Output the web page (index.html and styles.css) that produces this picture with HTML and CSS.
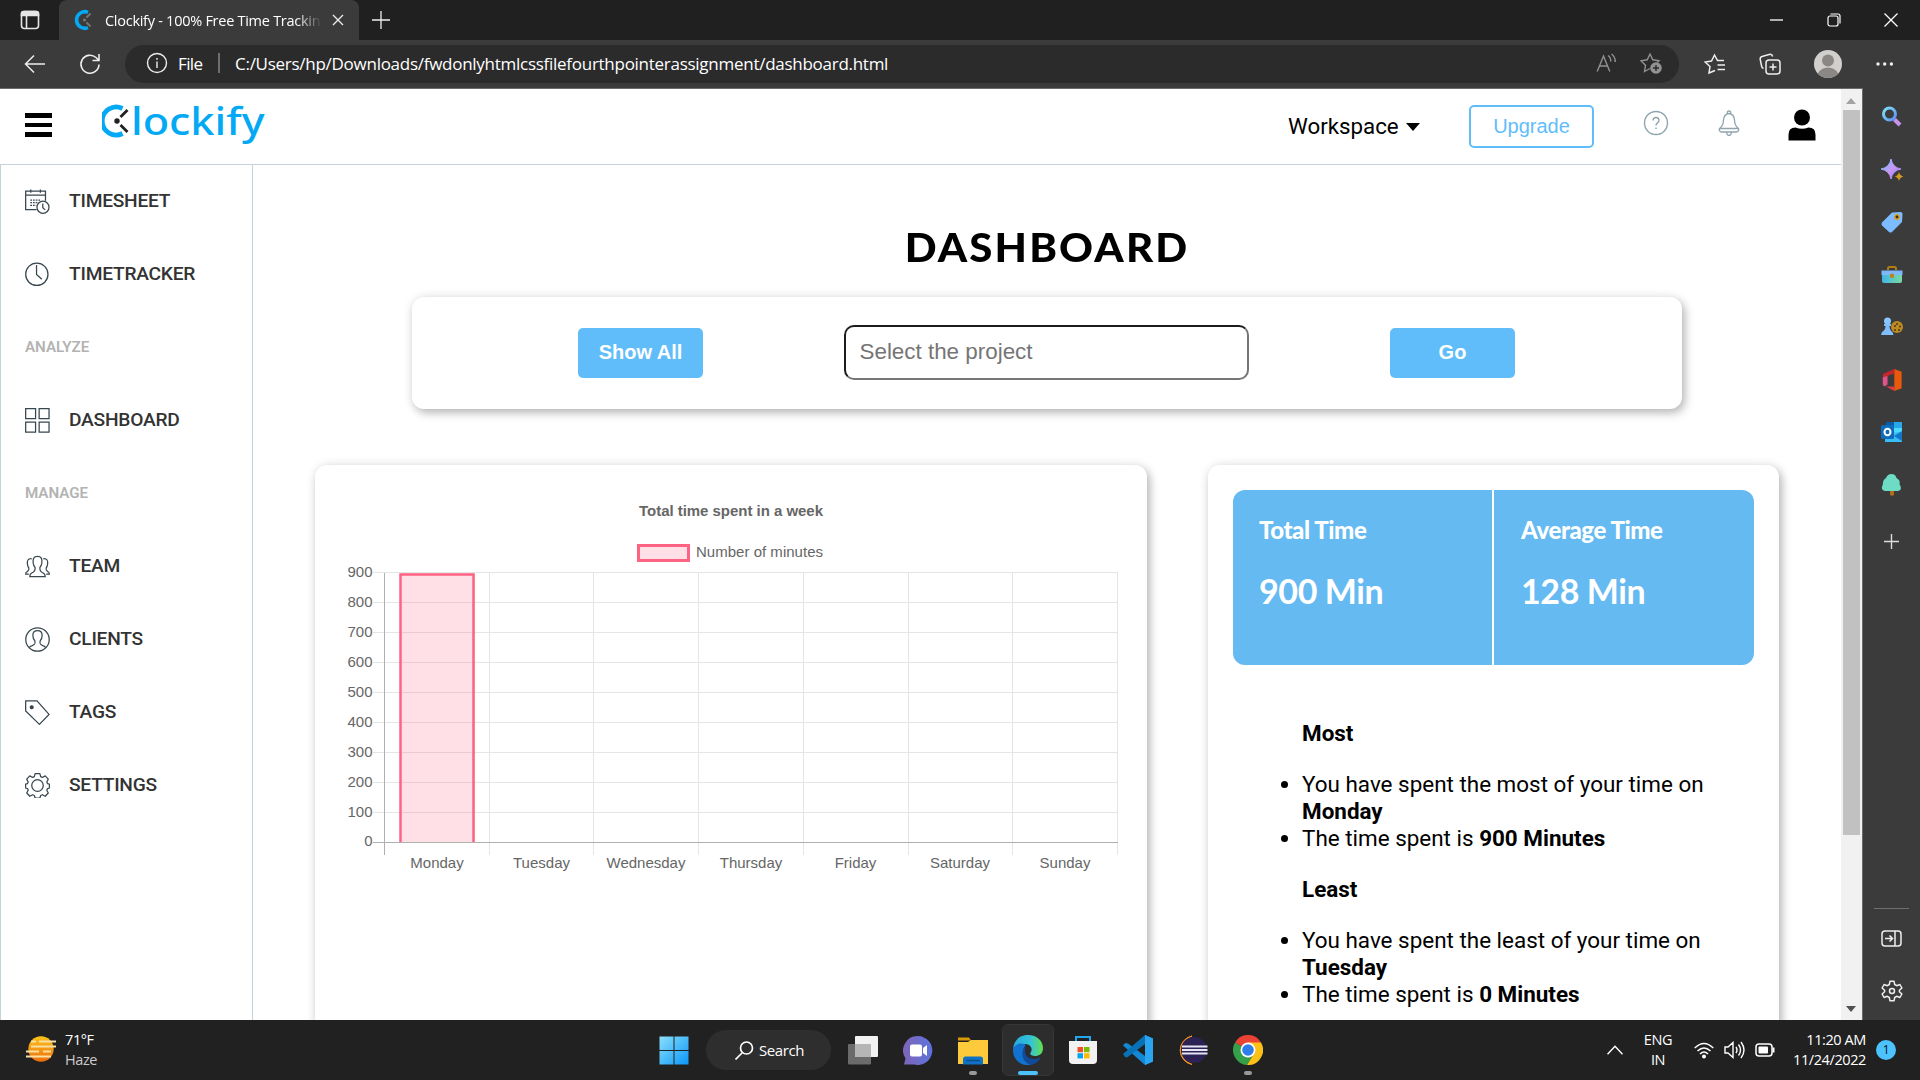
FILE: index.html
```html
<!DOCTYPE html>
<html lang="en">
<head>
<meta charset="utf-8">
<title>Clockify - 100% Free Time Tracking</title>
<link rel="stylesheet" href="styles.css">
</head>
<body>
<div class="screen">
  <header class="tabs">
    <div class="tab-menu"><svg width="20" height="20" viewBox="0 0 20 20" fill="none" stroke="#e6e6e6" stroke-width="1.6"><rect x="1.5" y="1.5" width="17" height="17" rx="3"/><path d="M1.500 5.500V3.500q0-2 2-2h13q2 0 2 2v2z" fill="#e6e6e6"/><path d="M6.500 6v12.500"/></svg></div>
    <div class="tab">
      <svg width="20" height="22" viewBox="0 0 20 22" fill="none"><path d="M14 3.300A8.300 8.300 0 1 0 14 18.700" stroke="#03a9f4" stroke-width="3.600"/><circle cx="10.500" cy="11" r="1.600" fill="#777"/><path d="M12.500 8.500l4-4M12.500 13.500l4 4" stroke="#777" stroke-width="1.800"/></svg>
      <span class="tab-title">Clockify - 100% Free Time Trackin</span>
      <svg width="12" height="12" viewBox="0 0 12 12" stroke="#eee" stroke-width="1.300"><path d="M1 1l10 10M11 1L1 11"/></svg>
    </div>
    <svg class="new-tab" width="18" height="18" viewBox="0 0 18 18" stroke="#eee" stroke-width="1.300"><path d="M9 0v18M0 9h18"/></svg>
    <div class="win-buttons">
      <svg width="14" height="14" viewBox="0 0 14 14" stroke="#fff" stroke-width="1.300"><path d="M0 7h13"/></svg>
      <svg width="14" height="14" viewBox="0 0 14 14" stroke="#fff" fill="none" stroke-width="1.200"><rect x="1" y="3" width="10" height="10" rx="2"/><path d="M3.500 1H11q2 0 2 2v7.500"/></svg>
      <svg width="14" height="14" viewBox="0 0 14 14" stroke="#fff" stroke-width="1.300"><path d="M.5.5l13 13M13.500.5l-13 13"/></svg>
    </div>
  </header>

  <div class="toolbar">
    <svg class="back" width="22" height="20" viewBox="0 0 22 20" fill="none" stroke="#eee" stroke-width="1.500"><path d="M10 1.500L1.500 10l8.500 8.500M1.500 10H21"/></svg>
    <svg class="reload" width="22" height="22" viewBox="0 0 22 22" fill="none" stroke="#eee" stroke-width="1.600"><path d="M20 11.500A9 9 0 1 1 17 4.500l2.500 2.500M20 1v6.500h-6.500"/></svg>
    <div class="address">
      <svg width="22" height="22" viewBox="0 0 22 22" fill="none" stroke="#eee" stroke-width="1.400"><circle cx="11" cy="11" r="9.500"/><path d="M11 9.500V16M11 6v1.800"/></svg>
      <span class="scheme">File</span><i></i>
      <span class="url">C:/Users/hp/Downloads/fwdonlyhtmlcssfilefourthpointerassignment/dashboard.html</span>
      <svg class="aloud" width="21" height="20" viewBox="0 0 21 20" fill="none" stroke="#929292" stroke-width="1.400"><path d="M1.200 18.500L7.500 3l6.300 15.500M3.500 13h8M12 2.500q3 2 2.800 6M15.500 1q4 3 3.700 8"/></svg>
      <svg width="23" height="22" viewBox="0 0 23 22" fill="none" stroke="#929292" stroke-width="1.400"><path d="M10 16.500L4.500 19.500l1-6.200L1 8.800l6.200-1L10 2l2.800 5.800 6.200 1-1.800 1.800"/><circle cx="16" cy="16" r="5.800" fill="#929292" stroke="none"/><path d="M16 13v6M13 16h6" stroke="#2b2b2b"/></svg>
    </div>
    <svg width="22" height="22" viewBox="0 0 22 22" fill="none" stroke="#eee" stroke-width="1.500"><path d="M11 17.500L5 20l1-6.500L1 9l6.500-1L10.500 2l3 5.500H20M13.500 12H21M13.500 16.500H21"/></svg>
    <svg width="22" height="22" viewBox="0 0 22 22" fill="none" stroke="#eee" stroke-width="1.500"><rect x="7" y="7" width="14" height="14" rx="3"/><path d="M14 10.500v7M10.500 14h7M4.500 15.500Q3 15 2.700 13.500L1.200 6.300Q1 4 3 3.500L11 1.300q2-.3 2.700 2.200"/></svg>
    <svg width="28" height="28" viewBox="0 0 28 28"><defs><clipPath id="av"><circle cx="14" cy="14" r="14"/></clipPath></defs><circle cx="14" cy="14" r="14" fill="#d2d0ce"/><circle cx="14" cy="10.500" r="6" fill="#8a8784"/><path clip-path="url(#av)" d="M3 28c0-14 22-14 22 0z" fill="#8a8784"/></svg>
    <svg width="18" height="4" viewBox="0 0 18 4" fill="#eee"><circle cx="2" cy="2" r="1.700"/><circle cx="8.700" cy="2" r="1.700"/><circle cx="15.400" cy="2" r="1.700"/></svg>
  </div>

  <div class="middle">
    <div class="page">
      <nav class="navbar">
        <div class="burger"><i></i><i></i><i></i></div>
        <svg class="logo" width="170" height="52" viewBox="0 0 170 52" fill="none"><path d="M20.500 5.500A14 14 0 1 0 20.500 30.500" stroke="#03a9f4" stroke-width="4.800"/><circle cx="15" cy="18" r="2.700" fill="#222"/><path d="M18.500 14l7-7M18.500 22l7 7" stroke="#222" stroke-width="2.800"/><text class="logo-text" x="29" y="31.500" textLength="133.500" lengthAdjust="spacingAndGlyphs">lockify</text></svg>
        <div class="workspace">Workspace<svg width="14" height="8" viewBox="0 0 14 8"><path d="M0 0h14L7 8z"/></svg></div>
        <button class="upgrade">Upgrade</button>
        <svg class="help" width="26" height="26" viewBox="0 0 26 26" fill="none" stroke="#90a4ae" stroke-width="1.400"><circle cx="13" cy="13" r="11.500"/><path d="M10 10.500q.2-3 3-3t3 2.800q0 1.700-1.800 2.800-1.200.8-1.200 2.400M13 17.500v1.500"/></svg>
        <svg class="bell" width="22" height="26" viewBox="0 0 22 26" fill="none" stroke="#90a4ae" stroke-width="1.300"><path d="M9.300 3.600Q9 1 11 1t1.700 2.600M11 3.500q-5 .5-5.500 6.500-.2 6-4 8.500-1 3 2.500 3.500h14q3.500-.5 2.500-3.500-3.800-2.500-4-8.500-.5-6-5.500-6.500zM2 18.500h18M8.500 22.500q.5 3 2.500 3t2.500-3"/></svg>
        <svg class="user" width="28" height="32" viewBox="0 0 28 32"><circle cx="14" cy="8.500" r="8"/><path d="M.5 31.500v-6q0-7 7-7 6.500 2.500 13 0 7 0 7 7v6z"/></svg>
      </nav>
      <div class="content">
        <aside class="menu">
          <a><svg viewBox="0 0 26 26"><path d="M12 21.500H.7V2.300h20.600v10M.7 6.300h20.600M6 .5v3.500M16 .5v3.500"/><path d="M5.500 11.500h11M5.500 14.200h8M5.500 17h6" stroke-dasharray="1.800 1"/><circle cx="18.700" cy="19" r="6.300"/><path d="M18.500 15v4.500l2.500 2.200"/></svg>TIMESHEET</a>
          <a><svg viewBox="0 0 26 26"><circle cx="12.300" cy="12.800" r="11.600"/><path d="M12 3v10l5.500 5"/></svg>TIMETRACKER</a>
          <h6>ANALYZE</h6>
          <a><svg viewBox="0 0 26 26"><path d="M.7.700h10.300V11H.7zM14.700.700H25V11H14.700zM.7 14.700h10.300V25H.7zM14.700 14.700H25V25H14.700z"/></svg>DASHBOARD</a>
          <h6>MANAGE</h6>
          <a><svg viewBox="0 0 26 26"><path d="M13 2.500c-4 0-5 2.500-4.500 7q.5 3 2 4.500c.5 3.500-.5 4.500-3 5.500Q5 20.500 5 23.500h16q0-3-2.500-4c-2.500-1-3.500-2-3-5.500q1.500-1.500 2-4.500c.5-4.500-.5-7-4.500-7zM7 5C3 4.500 2 7 2.500 10.500q.5 3 1.500 4c.5 3-.5 3-2 4Q.7 19 .7 21H4M19 5c4-.5 5 2 4.500 5.500q-.5 3-1.500 4c-.5 3 .5 3 2 4q1.300.5 1.300 2.500H22"/></svg>TEAM</a>
          <a><svg viewBox="0 0 26 26"><circle cx="13" cy="13" r="12.200"/><path d="M4.500 21.500q.5-1.500 3-2.200c3-1 3.500-2 2.700-5q-2-2-2-5.500c0-3.500 1.800-5 4.800-5s4.800 1.500 4.800 5q0 3.500-2 5.500c-.8 3-.3 4 2.700 5q2.500.7 3 2.200"/></svg>CLIENTS</a>
          <a><svg viewBox="0 0 26 26"><path d="M.7.900h11.800L25 15 15 25.300.7 11.500z"/><circle cx="7" cy="7.500" r="1.500" fill="#37474f"/></svg>TAGS</a>
          <a><svg viewBox="0 0 26 26"><circle cx="13" cy="13" r="6"/><path d="M10.500.7h5l.8 3.100 1.800.8 2.900-1.600 3.200 3.400-1.500 2.900.7 1.700 2 .600v4l-2 .6-.7 1.700 1.500 2.900-3.200 3.400-2.900-1.600-1.800.8-.8 2.600h-5l-.8-2.600-1.800-.8L5 24.200l-3.200-3.400 1.500-2.900-.7-1.700-2-.6v-4l2-.6.7-1.700-1.500-2.900L5 3l2.900 1.600 1.800-.8z" stroke-linejoin="round"/></svg>SETTINGS</a>
        </aside>
        <main class="main">
          <h1>DASHBOARD</h1>
          <section class="card filter">
            <button class="btn">Show All</button>
            <input type="text" placeholder="Select the project">
            <button class="btn">Go</button>
          </section>
          <div class="panels">
            <section class="card chart">
              <svg width="832" height="420" viewBox="315 465 832 420">
                <text class="ct" x="731" y="516" textLength="184">Total time spent in a week</text>
                <rect x="638.500" y="545.500" width="50" height="15" fill="#ffe0e6" stroke="#ff6384" stroke-width="3"/>
                <text x="696" y="557" textLength="127">Number of minutes</text>
                <g stroke="#e5e5e5">
                  <path d="M373 572.500h745M373 602.500h745M373 632.500h745M373 662.500h745M373 692.500h745M373 722.500h745M373 752.500h745M373 782.500h745M373 812.500h745"/>
                  <path d="M489.500 572v283M593.500 572v283M698.500 572v283M803.500 572v283M908.500 572v283M1012.500 572v283M1117.500 572v283"/>
                </g>
                <path d="M384.500 573v282M373 842.500h745" stroke="#b0b0b0"/>
                <path d="M400 842V573h75v269z" fill="#ff6384" fill-opacity=".2"/>
                <path d="M400.500 842V574.500h73V842" fill="none" stroke="#ff6384" stroke-width="2.500"/>
                <g text-anchor="end"><text x="372.500" y="577">900</text><text x="372.500" y="607">800</text><text x="372.500" y="637">700</text><text x="372.500" y="667">600</text><text x="372.500" y="697">500</text><text x="372.500" y="727">400</text><text x="372.500" y="757">300</text><text x="372.500" y="787">200</text><text x="372.500" y="817">100</text><text x="372.500" y="846">0</text></g>
                <g text-anchor="middle"><text x="437" y="868">Monday</text><text x="541.500" y="868">Tuesday</text><text x="646" y="868">Wednesday</text><text x="751" y="868">Thursday</text><text x="855.500" y="868">Friday</text><text x="960" y="868">Saturday</text><text x="1065" y="868">Sunday</text></g>
              </svg>
            </section>
            <section class="card stats">
              <div class="totals">
                <div><h4>Total Time</h4><p>900 Min</p></div>
                <div><h4>Average Time</h4><p>128 Min</p></div>
              </div>
              <div class="notes">
                <h5>Most</h5>
                <ul><li>You have spent the most of your time on <b>Monday</b></li><li>The time spent is <b>900 Minutes</b></li></ul>
                <h5>Least</h5>
                <ul><li>You have spent the least of your time on <b>Tuesday</b></li><li>The time spent is <b>0 Minutes</b></li></ul>
              </div>
            </section>
          </div>
        </main>
      </div>
    </div>
    <div class="scroll"><svg width="10" height="6" viewBox="0 0 10 6" fill="#a3a3a3"><path d="M5 0l5 6H0z"/></svg><div class="thumb"></div><svg width="10" height="6" viewBox="0 0 10 6" fill="#505050"><path d="M5 6l5-6H0z"/></svg></div>
    <aside class="edge-bar">
      <svg viewBox="0 0 22 22" fill="none"><defs><linearGradient id="g1" x2="1" y2="1"><stop stop-color="#7fe3f5"/><stop offset="1" stop-color="#5b8df5"/></linearGradient><linearGradient id="g2" x2="1" y2="1"><stop stop-color="#6ac5ff"/><stop offset=".5" stop-color="#c49af5"/><stop offset="1" stop-color="#a673e8"/></linearGradient><linearGradient id="g3" x2="1"><stop stop-color="#3fb6e8"/><stop offset="1" stop-color="#7ad9a0"/></linearGradient></defs><circle cx="8.500" cy="8" r="6" stroke="url(#g1)" stroke-width="3"/><path d="M13.500 13.500l5.500 5.500" stroke="#c793ea" stroke-width="4"/></svg>
      <svg viewBox="0 0 22 22"><path d="M10 0q1.500 8.500 10 10-8.500 1.500-10 10-1.500-8.500-10-10 8.500-1.500 10-10z" fill="url(#g2)" stroke="url(#g2)"/><path d="M18 13q.8 3.700 4.500 4.500-3.700.8-4.500 4.500-.8-3.700-4.500-4.500 3.700-.8 4.500-4.500z" fill="#d39a1c"/></svg>
      <svg viewBox="0 0 22 22"><path d="M11 1.500l8.500-.5q2 0 2 2l-.5 8-10 10q-1.500 1-3 0L1 14.500q-1-1.500 0-3z" fill="#7cbcff"/><circle cx="16" cy="6" r="2.200" fill="#333" stroke="#e19a16" stroke-width="1.500"/></svg>
      <svg viewBox="0 0 22 22"><path d="M7 6V4.500Q7 3 8.500 3h5Q15 3 15 4.500V6" fill="none" stroke="#b07d12" stroke-width="2"/><path d="M1 9h20v8q0 2-2 2H3q-2 0-2-2z" fill="url(#g3)"/><path d="M.5 6.500h21V11H.5z" fill="#7eb7fa"/><rect x="9" y="9.500" width="4" height="4.500" rx="1.500" fill="#b9851d"/></svg>
      <svg viewBox="0 0 22 22"><circle cx="16" cy="11" r="6" fill="#bd8a23"/><g fill="#4b3710"><circle cx="16" cy="8" r="1"/><circle cx="19" cy="10.500" r="1"/><circle cx="18" cy="14" r="1"/><circle cx="14" cy="14" r="1"/><circle cx="14" cy="10" r="1"/></g><circle cx="6.500" cy="5" r="3.500" fill="#8ac7ff"/><path d="M3 8h7v2H8.500q0 4 3 6l1 3H0l1-3q3.500-2 3.500-6H3z" fill="#7fbdfb"/></svg>
      <svg viewBox="0 0 22 24"><path d="M13.500 0L21.500 3v18l-8 3z" fill="#e8590c"/><path d="M13.500 0v5L6 7.500v9.500l-3.500 2L1 17V5.500z" fill="#c4262e"/><path d="M1 9l5-1.500V17l-3.500 2L1 17z" fill="#d9558d"/><path d="M4.500 19h9v5z" fill="#e63946"/></svg>
      <svg viewBox="0 0 22 22"><path d="M5 1h16v12H5z" fill="#28a8ea"/><path d="M5 1h8v6H5z" fill="#0a5ea8"/><path d="M13 7h8v6h-8z" fill="#50d9ff"/><path d="M4 12l17-1v10H4z" fill="#38bdf5"/><path d="M13 15l8-5v10z" fill="#1378c8"/><rect y="4" width="13" height="14" rx="1.500" fill="#0f6cbd"/><ellipse cx="6.500" cy="11" rx="3" ry="3.300" fill="none" stroke="#fff" stroke-width="2"/></svg>
      <svg viewBox="0 0 22 22"><path d="M9 16h4v5q-2 1.500-4 0z" fill="#b06f1c"/><path d="M10.500 0q4 0 5 4 4 2 3 6 3.500 6-1.500 7H4q-5-1-2-7-.5-4 3-6 1.500-4 5.500-4z" fill="#6edbc4"/></svg>
      <svg viewBox="0 0 22 22" stroke="#ddd" stroke-width="1.400"><path d="M10.500 3v15M3 10.500h15"/></svg>
      <hr>
      <svg viewBox="0 0 22 22" fill="none" stroke="#eee" stroke-width="1.500"><rect x="1" y="3" width="19" height="15" rx="3"/><path d="M14 3v15M4 10.500h7M8.500 7.500l3 3-3 3"/></svg>
      <svg viewBox="0 0 22 22" fill="none" stroke="#eee" stroke-width="1.500" stroke-linejoin="round"><circle cx="11" cy="11" r="2.500"/><path d="M9 1.200h4l.7 3.300 2 1.200 3.200-1.200 2 3.500-2.500 2.300v1.400l2.500 2.300-2 3.500-3.200-1.200-2 1.200-.7 3.300H9l-.7-3.300-2-1.200-3.200 1.200-2-3.500 2.500-2.300v-1.400L1.100 8l2-3.500 3.200 1.200 2-1.200z"/></svg>
    </aside>
  </div>

  <footer class="taskbar">
    <div class="weather">
      <svg width="30" height="26" viewBox="0 0 30 26"><defs><linearGradient id="sun" x2="0" y2="1"><stop stop-color="#fcc419"/><stop offset="1" stop-color="#ee6c0b"/></linearGradient></defs><circle cx="15" cy="13" r="12.700" fill="url(#sun)"/><path d="M5 5.500h5M13 5.500h17M5 10.500h25M0 15.500h13M17 15.500h8M0 20.500h25" stroke="#f7dfa6" stroke-width="2.200"/></svg>
      <div>71°F<br><span>Haze</span></div>
    </div>
    <div class="apps">
      <div class="app"><svg viewBox="0 0 30 30"><defs><linearGradient id="win" x2="1" y2="1"><stop stop-color="#8be0fb"/><stop offset="1" stop-color="#0a96f8"/></linearGradient></defs><path d="M.5 1.500h14V15h-14zM15.500 1.500h14V15h-14zM.5 16h14v13.500h-14zM15.500 16h14v13.500h-14z" fill="url(#win)"/></svg></div>
      <div class="search"><svg width="19" height="19" viewBox="0 0 19 19" fill="none" stroke="#fff" stroke-width="1.700"><circle cx="11.500" cy="7" r="6"/><path d="M7.500 11.500l-7 7"/></svg>Search</div>
      <div class="app"><svg viewBox="0 0 30 30"><rect x="7" y="1" width="23" height="21" rx="1" fill="#f1f1f1"/><rect y="9" width="23" height="20.500" rx="1" fill="#6b6b6b"/><path d="M7 9h16v13H7z" fill="#b5b5b5"/></svg></div>
      <div class="app"><svg viewBox="0 0 30 30"><defs><linearGradient id="chat" x2="1"><stop stop-color="#7f65b8"/><stop offset="1" stop-color="#5d73dc"/></linearGradient></defs><path d="M15 1a14.500 14.500 0 1 1-4 28.500H1l1.500-6A14.500 14.500 0 0 1 15 1z" fill="url(#chat)"/><rect x="7" y="9.500" width="12" height="12" rx="2" fill="#fff"/><path d="M20 13l4-3v11l-4-3z" fill="#fff"/></svg></div>
      <div class="app on"><svg viewBox="0 0 30 30"><path d="M0 2.500h11l2 3H0z" fill="#d99a07"/><path d="M0 7h10l3-2h17v24H0z" fill="#fdca3b"/><path d="M5 29.500V24q0-2.500 2.500-2.500h15Q25 21.500 25 24v5.500z" fill="#1072c4"/><path d="M8 25.500h14" stroke="#0a4f8e" stroke-width="1.500"/></svg></div>
      <div class="app active"><svg viewBox="0 0 30 30"><defs><linearGradient id="ed" x2="1"><stop stop-color="#25a8dd"/><stop offset=".6" stop-color="#34c3d6"/><stop offset="1" stop-color="#66e04b"/></linearGradient></defs><path d="M0 14C1 4 8 0 15 0c9 0 15 6 15 13 0 6-4 8-8 8-4 0-6-2-4-4 2-4-1-8-6-8C6 9 1 11 0 14z" fill="url(#ed)"/><path d="M0 14C2 9 8 7 13 10c-3 2-4 9 0 13 4 3 10 2 14 0-3 5-8 7-13 7C6 30-.5 23 0 14z" fill="#1272cf"/><path d="M13 11c-7 6-3 17 5 19 4-1 7-3 9.500-7C18 26 9 22 13 11z" fill="#114a99"/></svg></div>
      <div class="app"><svg viewBox="0 0 30 30"><path d="M8 7V2h14v5" fill="none" stroke="#22a7ec" stroke-width="2"/><path d="M1 6h28v19q0 4-4 4H5q-4 0-4-4z" fill="#f2f2f2"/><path d="M9.500 12H15v5.200H9.500z" fill="#f25022"/><path d="M16 12h5.500v5.200H16z" fill="#7fba00"/><path d="M9.500 18.200H15v5.200H9.500z" fill="#00a4ef"/><path d="M16 18.200h5.500v5.200H16z" fill="#ffb900"/></svg></div>
      <div class="app"><svg viewBox="0 0 30 30"><path d="M22 0l8 3.500v23L22 30 0 10.500l2-2.500 3 .5L22 21z" fill="#1388d4"/><path d="M22 0v9L4 22.500l-2-.5L0 19z" fill="#0871b8"/><path d="M22 0l8 3.500v23L22 30z" fill="#2aa5f2"/></svg></div>
      <div class="app"><svg viewBox="0 0 30 30"><path d="M14 1A14.500 14.500 0 0 0 14 29.500Q3 25 3 15T14 1z" fill="#f7941e" stroke="#f7941e"/><circle cx="16" cy="15" r="13" fill="#2c2255"/><path d="M4 11.500h25.500M4 15h25.500M4 18.500h25.500" stroke="#e6e3f3" stroke-width="2"/></svg></div>
      <div class="app on"><svg viewBox="0 0 30 30"><path d="M15 15L2 7.500A15 15 0 0 1 28 7.500z" fill="#ea4335"/><path d="M15 15L2 7.500A15 15 0 0 0 14 30l7-11.500z" fill="#34a04a"/><path d="M15 15V7.500h13A15 15 0 0 1 14 30l7-11.500z" fill="#fbc116"/><circle cx="15" cy="15" r="7.500" fill="#fff"/><circle cx="15" cy="15" r="5.800" fill="#2f7de9"/></svg></div>
    </div>
    <div class="tray">
      <svg class="up" width="16" height="10" viewBox="0 0 16 10" fill="none" stroke="#fff" stroke-width="1.400"><path d="M.5 9.200L8 1.200l7.500 8"/></svg>
      <div class="lang">ENG<br>IN</div>
      <svg width="20" height="17" viewBox="0 0 20 17" fill="none" stroke="#fff" stroke-width="1.500"><path d="M.7 6q9.300-9 18.600 0M3.500 9q6.500-6 13 0M6 12q4-4 8 0"/><circle cx="10" cy="14.500" r="2" fill="#fff" stroke="none"/></svg>
      <svg width="21" height="18" viewBox="0 0 21 18" fill="none" stroke="#fff" stroke-width="1.400"><path d="M1 6h3l5-4.500v15L4 12H1zM12 6q2 3 0 6M14.500 3.500q4 5.500 0 11M17 1q6 8 0 16"/></svg>
      <svg width="20" height="14" viewBox="0 0 20 14" fill="none" stroke="#fff" stroke-width="1.500"><rect x="1" y="1" width="16" height="12" rx="3"/><path d="M18.500 4.500v5" stroke-width="2"/><rect x="3.500" y="3.500" width="9.500" height="7" rx="1" fill="#fff" stroke="none"/></svg>
      <div class="clock"><span>11:20 AM</span><span>11/24/2022</span></div>
      <div class="badge">1</div>
    </div>
  </footer>
</div>
</body>
</html>
```
FILE: styles.css
```css
* { box-sizing: border-box; }
body { margin: 0; font-family: Roboto, sans-serif; }
svg { display: block; flex: none; }
button, input { font-family: "Liberation Sans", sans-serif; margin: 0; }

.screen { width: 1920px; height: 1080px; display: flex; flex-direction: column; overflow: hidden; }

/* browser window */
.tabs { height: 40px; flex: none; display: flex; background: #202020; color: #fff; font-family: "Open Sans", sans-serif; }
.tab-menu { width: 59px; display: flex; align-items: center; justify-content: center; }
.tab { width: 300px; padding-left: 15px; display: flex; align-items: center; background: #3b3b3b; border-radius: 8px 8px 0 0; }
.tab-title { width: 217px; margin: 0 10px 0 11px; overflow: hidden; white-space: nowrap; font-size: 14.500px; letter-spacing: -0.270px; -webkit-mask-image: linear-gradient(90deg, #000 88%, transparent); mask-image: linear-gradient(90deg, #000 88%, transparent); }
.new-tab { margin: 11px 0 0 13px; }
.win-buttons { margin: 13px 22px 0 auto; display: flex; gap: 43px; }

.toolbar { height: 48px; flex: none; display: flex; align-items: center; padding: 0 26px 0 24px; background: #3b3b3b; font-family: "Open Sans", sans-serif; color: #fff; }
.back { margin-right: 33px; }
.reload { margin-right: 24px; }
.address { width: 1555px; height: 38px; margin-right: 25px; padding: 0 16px 2px 21px; display: flex; align-items: center; border-radius: 19px; background: #2b2b2b; }
.toolbar > svg:nth-of-type(n + 3) { margin-right: 33px; }
.toolbar > svg:nth-of-type(5) { margin-right: 34px; }
.toolbar > svg:last-child { margin-right: 0; }
.scheme { margin-left: 10px; width: 40px; font-size: 17px; letter-spacing: -0.600px; }
.address i { width: 2px; height: 20px; background: #6e6e6e; margin-right: 15px; }
.url { font-size: 17px; letter-spacing: -0.270px; white-space: nowrap; }
.aloud { margin: 0 23px 0 auto; }

.middle { height: 932px; flex: none; display: flex; }
.page { width: 1841px; border-top: 1px solid #6b6b6b; background: #fff; overflow: hidden; display: flex; flex-direction: column; }
.scroll { width: 22px; padding: 9px 1px 8px 0; border-top: 1px solid #6b6b6b; border-right: 1px solid #6b6b6b; background: #f1f1f1; display: flex; flex-direction: column; align-items: center; }
.thumb { width: 17px; height: 725px; margin: 6px 0 auto; background: #c1c1c1; }
.edge-bar { width: 57px; padding-top: 18px; background: #3b3b3b; display: flex; flex-direction: column; align-items: center; }
.edge-bar svg { width: 22px; height: 22px; margin-bottom: 30.500px; }
.edge-bar svg:nth-of-type(8) { margin-bottom: 35px; }
.edge-bar hr { width: 35px; margin: auto 0 19px; border: 0; border-top: 1px solid #6f6f6f; }
.edge-bar svg:last-child { margin-bottom: 18px; }

/* app header */
.navbar { height: 76px; flex: none; display: flex; align-items: flex-start; padding-left: 25px; border-bottom: 1px solid #c6d2d9; }
.burger { width: 27px; margin-top: 24px; display: flex; flex-direction: column; gap: 5px; }
.burger i { height: 4.500px; background: #000; }
.logo { margin: 14px 0 0 50px; }
.logo-text { font: 500 38.500px "Noto Sans", sans-serif; fill: #03a9f4; }
.workspace { margin: 24px 0 0 1016px; width: 181px; display: flex; align-items: center; gap: 7px; font-size: 22.300px; line-height: 27px; }
.upgrade { width: 125px; height: 43px; margin-top: 16px; border: 2px solid #61bdf9; border-radius: 5px; background: #fff; color: #61bdf9; font-size: 20px; }
.help { margin: 21px 0 0 49px; }
.bell { margin: 21px 0 0 49px; }
.user { margin: 20px 0 0 48px; }

.content { flex: 1; display: flex; min-height: 0; }
.menu { width: 253px; border: solid #c6d2d9; border-width: 0 1px; }
.menu a, .menu h6 { height: 73px; margin: 0; padding-left: 24px; display: flex; align-items: center; gap: 19px; color: #333; font-size: 19.200px; letter-spacing: -0.250px; font-weight: 500; }
.menu a { padding-bottom: 3px; }
.menu h6 { color: #b3b3b3; font-size: 15.200px; letter-spacing: -0.050px; font-weight: 600; padding-bottom: 2px; }
.menu svg { width: 25px; height: 25px; margin-top: 2px; fill: none; stroke: #37474f; stroke-width: 1.300; }

.main { width: 1588px; flex: none; }
h1 { margin: 57px 0 0; height: 75px; text-align: center; font: 900 39px/50px Lato, sans-serif; letter-spacing: 2px; transform: scaleX(1.075); }
.card { background: #fff; border-radius: 12px; box-shadow: 3px 4px 10px rgba(0, 0, 0, .25), 0 0 12px rgba(0, 0, 0, .08); }
.filter { width: 1270px; height: 112px; margin-left: 159px; padding: 0 2px 1px 0; display: flex; align-items: center; justify-content: center; gap: 141px; }
.btn { width: 125px; height: 50px; padding: 0 5px 1px 6px; border: 0; border-radius: 5px; background: #61bdf9; color: #fff; font-size: 20px; font-weight: bold; }
.filter input { width: 405px; height: 55px; padding: 0 14px 1px; border: 2px solid #767676; border-top-color: #1d1d1d; border-left-color: #1d1d1d; border-radius: 10px; background: #fff; font-size: 22.400px; }
.filter input::placeholder { color: #757575; }
.panels { display: flex; gap: 61px; margin: 56px 0 0 62px; height: 620px; }
.chart { width: 832px; }
.chart text { font: 15px "Liberation Sans", sans-serif; fill: #666; }
.chart .ct { font-weight: bold; text-anchor: middle; }
.stats { width: 571px; padding: 25px; }
.totals { width: 521px; height: 175px; display: grid; grid-template-columns: 259px 260px; gap: 2px; border-radius: 12px; overflow: hidden; color: #fff; font-family: Lato, sans-serif; letter-spacing: -0.400px; }
.totals div { padding: 25px 0 0 26px; background: #65baf2; }
.totals h4 { margin: 0; font-size: 24px; line-height: 30px; font-weight: 900; }
.totals div + div { padding-left: 27px; }
.totals p { margin: 21px 0 0; font-size: 34px; line-height: 50px; font-weight: 700; }
.notes { padding: 55px 40px 0 69px; font-size: 22.450px; line-height: 27px; }
.notes h5 { margin: 0 0 24px; font-size: inherit; font-weight: 700; }
.notes ul { margin: 0 0 24px; padding: 0; }

/* desktop taskbar */
.taskbar { height: 60px; flex: none; display: grid; grid-template-columns: 649px 1fr auto; background: #212121; color: #fff; font: 14.500px/20px "Open Sans", sans-serif; letter-spacing: -0.400px; }
.weather { display: flex; align-items: center; gap: 9px; padding-left: 26px; }
.weather svg { margin-bottom: 3px; }
.weather span { color: #ccc; }
.apps { display: flex; align-items: center; gap: 5px; }
.app { width: 50px; height: 50px; padding-top: 10px; border-radius: 5px; display: flex; flex-direction: column; align-items: center; justify-content: space-between; }
.app svg { width: 30px; height: 30px; }
.app::after { content: ""; width: 8px; height: 4px; border-radius: 2px; }
.on::after { background: #999; }
.active { background: #2d2d2d; outline: 1px solid #363636; }
.active::after { width: 20px; background: #4cc2ff; }
.search { width: 125px; height: 40px; margin: 0 2px; display: flex; align-items: center; gap: 5px; padding-left: 29px; border-radius: 20px; background: #2e2e2e; font-size: 15px; }
.tray { display: flex; align-items: center; padding-right: 24px; }
.lang { width: 32px; margin: 0 20px 0 19px; text-align: center; }
.tray svg + svg { margin-left: 10px; }
.clock { width: 80px; margin: 0 10px 0 11px; display: flex; flex-direction: column; align-items: flex-end; white-space: nowrap; }
.badge { width: 20px; height: 20px; border-radius: 50%; background: #4cc2ff; color: #111; font-size: 12px; text-align: center; }
```
